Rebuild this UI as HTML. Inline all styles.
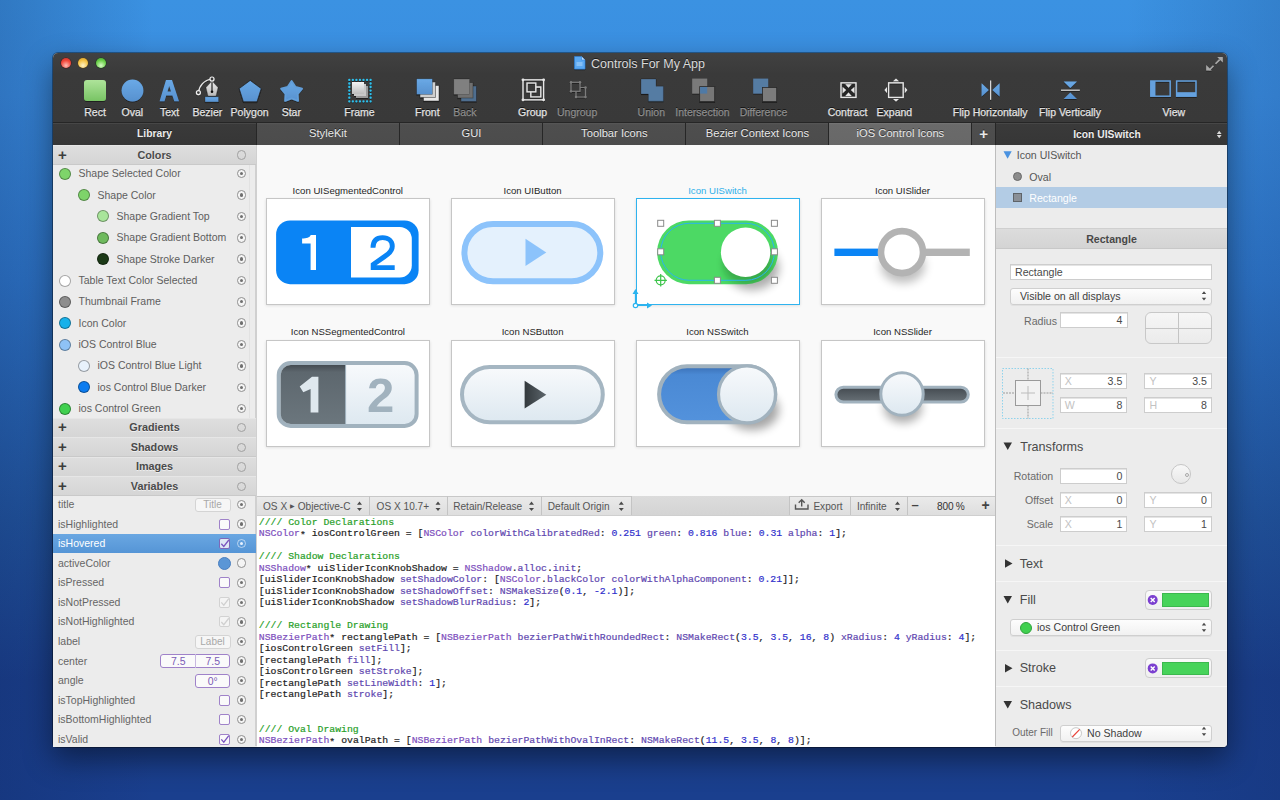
<!DOCTYPE html>
<html><head><meta charset="utf-8">
<style>
*{margin:0;padding:0;box-sizing:border-box}
html,body{width:1280px;height:800px;overflow:hidden}
body{position:relative;font-family:"Liberation Sans",sans-serif;
background:linear-gradient(180deg,#3b92e2 0%,#3a8de0 12%,#2f78cc 35%,#22559f 65%,#1b3f8c 85%,#1a3f8e 100%);}
.bgl{position:absolute;left:0;top:0;width:1280px;height:800px;
background:linear-gradient(90deg,rgba(10,30,80,.22) 0%,rgba(10,30,80,0) 12%,rgba(10,30,80,0) 88%,rgba(10,30,80,.15) 100%)}
.a{position:absolute;white-space:nowrap}
#win{position:absolute;left:53px;top:53px;width:1174px;height:694px;border-radius:5px 5px 4px 4px;
box-shadow:0 0 0 1px rgba(0,0,0,.35),0 12px 30px rgba(0,0,0,.45);background:#ececec}
#tb{position:absolute;left:53px;top:53px;width:1174px;height:70px;border-radius:5px 5px 0 0;background:linear-gradient(180deg,#414141,#3a3a3a 30%,#393939)}
.tl{position:absolute;top:57.8px;width:10px;height:10px;border-radius:50%}
.ti{position:absolute;top:105.5px;font-size:10.5px;line-height:13px;color:#e4e4e4;-webkit-text-stroke:.25px #e4e4e4;white-space:nowrap;text-shadow:0 -1px 0 rgba(0,0,0,.7);transform:translateX(-50%)}
.ti.dis{color:#8d8d8d;-webkit-text-stroke:.25px #8d8d8d}
svg{position:absolute;left:0;top:0;overflow:visible}

.tabbar{position:absolute;left:53px;top:122px;width:1174px;height:23px;background:#262626}
.tab{position:absolute;top:123px;height:22px;background:linear-gradient(#585858,#4e4e4e 8%,#4c4c4c);color:#e8e8e8;font-size:11.2px;line-height:21px;text-align:center;white-space:nowrap;text-shadow:0 -1px 0 rgba(0,0,0,.55)}
.tab.act{background:linear-gradient(#767676,#6a6a6a 8%,#686868)}
.hdr{position:absolute;top:123px;height:22px;background:linear-gradient(#3a3a3a,#363636);box-shadow:inset 0 1px 0 #474747;color:#ececec;font-size:10.3px;font-weight:bold;line-height:22px;text-align:center;text-shadow:0 -1px 0 rgba(0,0,0,.6)}

.lp{position:absolute;left:53px;top:145px;width:203px;height:602px;background:#ececec}
.sh{position:absolute;left:53px;width:202.5px;height:20px;background:linear-gradient(#dedede,#d5d5d5);border-bottom:1px solid #c9c9c9;border-top:1px solid #e6e6e6}
.sht{position:absolute;left:54px;width:201px;text-align:center;font-size:10.8px;font-weight:bold;color:#4a4a4a;line-height:14px;text-shadow:0 1px 0 rgba(255,255,255,.6)}
.row{position:absolute;font-size:10.5px;color:#5e5e5e;line-height:14px;white-space:nowrap}
.sw{position:absolute;width:12px;height:12px;border-radius:50%;border:1px solid rgba(0,0,0,.35)}
.rad{position:absolute;width:9.5px;height:9.5px;border-radius:50%;border:1.2px solid #8f8f8f;background:#f4f4f4;margin-left:.2px;margin-top:.2px}
.rad.on::after{content:"";position:absolute;left:2px;top:2px;width:3.4px;height:3.4px;border-radius:50%;background:#6f6f6f}
.cb{position:absolute;width:11px;height:11px;border-radius:2px;border:1px solid #9f82c9;background:#fafafa}
.tf{position:absolute;height:14px;border:1px solid #d4d4d4;border-radius:3px;background:#f6f6f6;font-size:10px;color:#a8a8a8;line-height:12px;text-align:center}
.pf{position:absolute;height:14px;border:1.2px solid #9f82c9;border-radius:3px;background:#fafafa;font-size:10.5px;color:#7b5cb6;line-height:12px;text-align:center}

.cv{position:absolute;left:257px;top:145px;width:738px;height:351px;background:#f9f9f9}
.fr{position:absolute;width:164px;height:107px;background:#fff;border:1px solid #c6c6c6;box-shadow:0 .5px 3px rgba(0,0,0,.13)}
.fl{position:absolute;font-size:9.6px;color:#262626;line-height:12px;text-align:center;white-space:nowrap;width:164px}

.ctb{position:absolute;left:257px;top:495.5px;width:738px;height:20px;background:linear-gradient(#eaeaea,#dedede);border-top:1px solid #c8c8c8;border-bottom:1px solid #cfcfcf}
.ctt{position:absolute;top:499.9px;font-size:10.1px;line-height:14px;color:#555;white-space:nowrap}
.csep{position:absolute;top:496px;width:1px;height:19px;background:#c4c4c4}
.code{position:absolute;left:257px;top:515.5px;width:738px;height:231px;background:#fff}
.cl{position:absolute;left:258.8px;font-family:"Liberation Mono",monospace;font-size:9.8px;line-height:11.5px;color:#1e1e1e;white-space:pre;-webkit-text-stroke:.2px currentColor}
.cm{color:#28a028}.ty{color:#7d4fbd}.me{color:#5f48b0}.nu{color:#3030cc}

.rp{position:absolute;left:996px;top:145px;width:231px;height:602px;background:#ececec;border-radius:0 0 4px 0}
.rt{position:absolute;font-size:10.6px;line-height:14px;color:#5a5a5a;white-space:nowrap}
.rh{position:absolute;font-size:12.6px;line-height:16px;color:#4a4a4a;white-space:nowrap}
.div{position:absolute;left:996px;width:231px;height:1px;background:#d2d2d2;border-bottom:1px solid #f6f6f6}
.nf{position:absolute;height:16px;background:#fff;border:1px solid #cdcdcd;box-shadow:inset 0 1px 0 #e4e4e4;font-size:10.6px;line-height:14px;color:#4a4a4a;white-space:nowrap}
.nf .v{position:absolute;right:4px;top:0}
.nf .p{position:absolute;left:4px;top:0;color:#c2c2c2}
.pop{position:absolute;height:17px;background:linear-gradient(#fdfdfd,#f1f1f1);border:1px solid #cfcfcf;border-radius:3px;box-shadow:0 1px 0 rgba(0,0,0,.05);font-size:10.6px;line-height:15px;color:#3e3e3e;white-space:nowrap}
.well{position:absolute;width:67px;height:20px;background:linear-gradient(#fbfbfb,#efefef);border:1px solid #cdcdcd;border-radius:4px}
</style></head>
<body>
<div class="bgl"></div>
<div id="win"></div>
<div id="tb"></div>
<div class="tl" style="left:60.8px;background:radial-gradient(circle at 50% 75%,#ffc0b8,#f4493c 55%,#c42a20);box-shadow:0 0 0 .6px rgba(80,0,0,.6)"></div>
<div class="tl" style="left:78.4px;background:radial-gradient(circle at 50% 75%,#fff2c8,#f6c448 55%,#d09520);box-shadow:0 0 0 .6px rgba(90,60,0,.6)"></div>
<div class="tl" style="left:96.2px;background:radial-gradient(circle at 50% 75%,#d8fbc8,#6ed24c 55%,#3c9a26);box-shadow:0 0 0 .6px rgba(0,60,0,.6)"></div>
<div class="a" style="left:591px;top:56.5px;font-size:12.5px;line-height:15px;color:#dadada;text-shadow:0 -1px 0 rgba(0,0,0,.6)">Controls For My App</div>
<svg width="1280" height="130" viewBox="0 0 1280 130">
 <defs>
  <linearGradient id="gRect" x1="0" y1="0" x2="0" y2="1"><stop offset="0" stop-color="#aee39a"/><stop offset="1" stop-color="#78c464"/></linearGradient>
  <linearGradient id="gBlue" x1="0" y1="0" x2="0" y2="1"><stop offset="0" stop-color="#6aa9e6"/><stop offset="1" stop-color="#5791cf"/></linearGradient>
  <linearGradient id="gNib" x1="0" y1="0" x2="0" y2="1"><stop offset="0" stop-color="#f0f0f0"/><stop offset="1" stop-color="#b8b8b8"/></linearGradient>
  <linearGradient id="gW" x1="0" y1="0" x2="0" y2="1"><stop offset="0" stop-color="#f4f4f4"/><stop offset="1" stop-color="#bdbdbd"/></linearGradient>
  <linearGradient id="gG" x1="0" y1="0" x2="0" y2="1"><stop offset="0" stop-color="#8a8a8a"/><stop offset="1" stop-color="#6a6a6a"/></linearGradient>
 <filter id="ds" x="-20%" y="-20%" width="140%" height="140%"><feDropShadow dx="0" dy=".6" stdDeviation=".7" flood-color="#000" flood-opacity=".75"/></filter>
 </defs>
<g filter="url(#ds)">
 <!-- doc icon -->
 <path d="M574.5 56.5h7l3.5 3.5v9h-10.5z" fill="#5aa8f2" stroke="#2f7fd6" stroke-width=".6"/>
 <path d="M581.5 56.5v3.5h3.5" fill="#bfe0ff" stroke="#2f7fd6" stroke-width=".6"/>
 <path d="M576.5 63h6M576.5 65h6" stroke="#d8ecff" stroke-width=".7"/>
 <!-- resize -->
 <path d="M1215.5 63.8l4.2-4.2M1213.5 65.8l-4.2 4.2" stroke="#a8a8a8" stroke-width="1.6" fill="none"/>
 <path d="M1217.2 57h5.6v5.6zM1211.8 70.6h-5.6v-5.6z" fill="#a8a8a8"/>
 <!-- Rect -->
 <rect x="84" y="80" width="22" height="21" rx="3" fill="url(#gRect)"/>
 <!-- Oval -->
 <circle cx="132.5" cy="90.5" r="10.9" fill="url(#gBlue)"/>
 <!-- Text A -->
 <path d="M166 80H172L179 101.2H174.3L172.4 95.6H166.2L164.5 101.2H159.6ZM169.2 86L171 91.4H167.5Z" fill="url(#gBlue)" fill-rule="evenodd"/>
 <!-- Bezier -->
 <path d="M198.5 92.5C199 86 204 80 212 79" stroke="#e8e8e8" stroke-width="1.2" fill="none"/>
 <circle cx="198.4" cy="92.6" r="2" fill="#3a3a3a" stroke="#eee" stroke-width="1.2"/>
 <path d="M212 81l6 6.5-2 8.5h-8l-2-8.5z" fill="url(#gNib)" stroke="#222" stroke-opacity=".5" stroke-width=".6"/>
 <path d="M212 82v9.5" stroke="#222" stroke-width="1.2"/>
 <circle cx="212" cy="91.7" r="1.3" fill="#111"/>
 <circle cx="212" cy="79" r="2" fill="#3a3a3a" stroke="#eee" stroke-width="1.2"/>
 <rect x="205" y="96.8" width="13.6" height="5.2" fill="url(#gBlue)" stroke="#222" stroke-opacity=".5" stroke-width=".6"/>
 <!-- Polygon -->
 <path d="M250.2 80.4l11 8.2-4.2 13.2h-13.6l-4.2-13.2z" fill="url(#gBlue)" stroke="#1f1f1f" stroke-opacity=".7" stroke-width="1"/>
 <!-- Star -->
 <path d="M291.6 81.0 L295.4 86.8 L302.1 88.6 L297.7 94.0 L298.1 100.9 L291.6 98.4 L285.1 100.9 L285.5 94.0 L281.1 88.6 L287.8 86.8Z" fill="url(#gBlue)" stroke="#629ed9" stroke-width="1.8" stroke-linejoin="round"/>
 <!-- Frame -->
 <g fill="#2ec1ee"><circle cx="349.30" cy="79.9" r="1.15"/><circle cx="349.30" cy="101.3" r="1.15"/><circle cx="352.85" cy="79.9" r="1.15"/><circle cx="352.85" cy="101.3" r="1.15"/><circle cx="356.40" cy="79.9" r="1.15"/><circle cx="356.40" cy="101.3" r="1.15"/><circle cx="359.95" cy="79.9" r="1.15"/><circle cx="359.95" cy="101.3" r="1.15"/><circle cx="363.50" cy="79.9" r="1.15"/><circle cx="363.50" cy="101.3" r="1.15"/><circle cx="367.05" cy="79.9" r="1.15"/><circle cx="367.05" cy="101.3" r="1.15"/><circle cx="370.60" cy="79.9" r="1.15"/><circle cx="370.60" cy="101.3" r="1.15"/><circle cx="349.3" cy="83.5" r="1.15"/><circle cx="370.6" cy="83.5" r="1.15"/><circle cx="349.3" cy="87" r="1.15"/><circle cx="370.6" cy="87" r="1.15"/><circle cx="349.3" cy="90.6" r="1.15"/><circle cx="370.6" cy="90.6" r="1.15"/><circle cx="349.3" cy="94.1" r="1.15"/><circle cx="370.6" cy="94.1" r="1.15"/><circle cx="349.3" cy="97.7" r="1.15"/><circle cx="370.6" cy="97.7" r="1.15"/></g>
 <rect x="356" y="86" width="12" height="12" fill="#9a9a9a"/>
 <rect x="354" y="84" width="12" height="12" fill="#c8c8c8"/>
 <rect x="352" y="82" width="12" height="12" fill="url(#gW)"/>
 <!-- Front -->
 <rect x="423.5" y="85.5" width="15.5" height="15.5" fill="#e8e8e8" stroke="#222" stroke-opacity=".6" stroke-width=".8"/>
 <rect x="420" y="82" width="15.5" height="15.5" fill="#cfcfcf" stroke="#222" stroke-opacity=".6" stroke-width=".8"/>
 <rect x="416.6" y="78.8" width="15.8" height="15.6" fill="url(#gBlue)" stroke="#222" stroke-opacity=".5" stroke-width=".6"/>
 <!-- Back -->
 <rect x="461" y="86" width="15.5" height="15.5" fill="#4f6e8f" stroke="#222" stroke-opacity=".5" stroke-width=".8"/>
 <rect x="457.5" y="82.5" width="15.5" height="15.5" fill="#6f6f6f" stroke="#222" stroke-opacity=".5" stroke-width=".8"/>
 <rect x="453.8" y="79" width="15.8" height="15.4" fill="#808080" stroke="#222" stroke-opacity=".4" stroke-width=".6"/>
 <!-- Group -->
 <rect x="523" y="79.8" width="20.6" height="20" fill="none" stroke="#e6e6e6" stroke-width="1.3"/>
 <g fill="#e6e6e6"><circle cx="523" cy="79.8" r="1.4"/><circle cx="543.6" cy="79.8" r="1.4"/><circle cx="523" cy="99.8" r="1.4"/><circle cx="543.6" cy="99.8" r="1.4"/></g>
 <rect x="527" y="83" width="8.8" height="8.8" fill="none" stroke="#e6e6e6" stroke-width="1.3"/>
 <path d="M535.8 87h5v9.8h-10v-5" fill="none" stroke="#e6e6e6" stroke-width="1.3"/>
 <!-- Ungroup -->
 <g stroke="#7c7c7c" stroke-width="1.2" fill="none"><rect x="571" y="82.3" width="9" height="9"/><path d="M580 87.5h5.5v9.5h-9.5v-5.7"/></g>
 <g fill="#7c7c7c"><circle cx="571" cy="82.3" r="1.2"/><circle cx="580" cy="82.3" r="1.2"/><circle cx="571" cy="91.3" r="1.2"/><circle cx="585.5" cy="87.5" r="1.2"/><circle cx="576" cy="97" r="1.2"/><circle cx="585.5" cy="97" r="1.2"/></g>
 <!-- Union -->
 <path d="M641 79h15v7.2h7.4v15h-15v-7.2h-7.4z" fill="#557ba3" stroke="#222" stroke-opacity=".4" stroke-width=".6"/>
 <!-- Intersection -->
 <rect x="692.2" y="78.6" width="15" height="15" fill="#7a7a7a"/>
 <rect x="699.7" y="86.6" width="15" height="15" fill="#777" stroke="#2a2a2a" stroke-width=".8"/>
 <rect x="700.1" y="87" width="7.1" height="6.6" fill="#4f7aa6"/>
 <!-- Difference -->
 <rect x="753.2" y="78.6" width="15" height="15" fill="#557ba3"/>
 <rect x="762.5" y="87.5" width="14.2" height="14.1" fill="#7c7c7c" stroke="#2a2a2a" stroke-width=".8"/>
 <!-- Contract -->
 <rect x="841" y="82.8" width="15" height="14.6" fill="none" stroke="#e6e6e6" stroke-width="1.3"/>
 <path d="M843 84.5l11 11M854 84.5l-11 11" stroke="#262626" stroke-width="1.8"/>
 <path d="M845.4 84.3h6.2l-3.1 3.5zM845.4 96h6.2l-3.1-3.5zM842.6 87v6.2l3.5-3.1zM854.4 87v6.2l-3.5-3.1z" fill="#e6e6e6"/>
 <!-- Expand -->
 <rect x="888.6" y="82.8" width="14.6" height="14.6" fill="none" stroke="#e6e6e6" stroke-width="1.3"/>
 <path d="M893 81.2l3-2.6 3 2.6zM893 99l3 2.6 3-2.6zM887 87.1l-2.6 3 2.6 3zM904.8 87.1l2.6 3-2.6 3z" fill="#e6e6e6"/>
 <!-- Flip H -->
 <path d="M990.6 80.4v19.4" stroke="#d8d8d8" stroke-width="1.2"/>
 <path d="M981.6 83.3l7.2 6.6-7.2 6.6zM999.6 83.3l-7.2 6.6 7.2 6.6z" fill="url(#gBlue)"/>
 <!-- Flip V -->
 <path d="M1061 90.2h18.8" stroke="#d8d8d8" stroke-width="1.2"/>
 <path d="M1063.6 81.4h13.4l-6.7 6.6zM1063.6 99h13.4l-6.7-6.6z" fill="url(#gBlue)"/>
 <!-- View -->
 <rect x="1150.8" y="81" width="19.4" height="15.2" fill="none" stroke="#65a1de" stroke-width="1.4"/>
 <rect x="1150.8" y="81" width="4.6" height="15.2" fill="#65a1de"/>
 <rect x="1176.6" y="81" width="19.4" height="15.2" fill="none" stroke="#65a1de" stroke-width="1.4"/>
 <rect x="1176.6" y="92.2" width="19.4" height="4" fill="#65a1de"/>
</g>
</svg>
<div class="ti" style="left:95px">Rect</div>
<div class="ti" style="left:132.3px">Oval</div>
<div class="ti" style="left:169.6px">Text</div>
<div class="ti" style="left:207.4px">Bezier</div>
<div class="ti" style="left:249.6px">Polygon</div>
<div class="ti" style="left:291.3px">Star</div>
<div class="ti" style="left:359.4px">Frame</div>
<div class="ti" style="left:427.3px">Front</div>
<div class="ti dis" style="left:464.9px">Back</div>
<div class="ti" style="left:532.6px">Group</div>
<div class="ti dis" style="left:577.1px">Ungroup</div>
<div class="ti dis" style="left:651.3px">Union</div>
<div class="ti dis" style="left:702.5px">Intersection</div>
<div class="ti dis" style="left:763.5px">Difference</div>
<div class="ti" style="left:847.5px">Contract</div>
<div class="ti" style="left:894.4px">Expand</div>
<div class="ti" style="left:990.2px">Flip Horizontally</div>
<div class="ti" style="left:1070px">Flip Vertically</div>
<div class="ti" style="left:1173.8px">View</div>

<div class="tabbar"></div><div class="hdr" style="left:53px;width:203px">Library</div><div class="tab" style="left:257px;width:142px">StyleKit</div><div class="tab" style="left:400.4px;width:142px">GUI</div><div class="tab" style="left:543.4px;width:142px">Toolbar Icons</div><div class="tab" style="left:686.4px;width:142px">Bezier Context Icons</div><div class="tab act" style="left:829.4px;width:142px">iOS Control Icons</div><div class="tab" style="left:972.3px;width:22.7px;font-size:15px;font-weight:bold">+</div><div class="hdr" style="left:996px;width:231px;padding-right:9px;line-height:23.5px">Icon UISwitch</div><svg width="1280" height="800"><path d="M1216.8 133.9l2.4-3.2 2.4 3.2zM1216.8 135l2.4 3.2 2.4-3.2z" fill="#d8d8d8"/></svg><div class="lp"></div><div class="a" style="left:255px;top:145px;width:1.5px;height:601px;background:#d0d0d0"></div><div class="a" style="left:249px;top:145px;width:1px;height:351px;background:#e2e2e2"></div><div class="sh" style="top:145px"></div><div class="a" style="left:58px;top:147.5px;font-size:15px;font-weight:bold;color:#3d3d3d;line-height:14px">+</div><div class="sht" style="top:147.6px">Colors</div><div class="rad" style="left:236.5px;top:150.3px;background:transparent;border-color:#a0a0a0"></div><div class="sw" style="left:59px;top:167.75px;background:#7ed46a"></div><div class="row" style="left:78.5px;top:166.25px">Shape Selected Color</div><div class="rad on" style="left:236.5px;top:168.75px"></div><div class="sw" style="left:78px;top:189.11px;background:#7ed46a"></div><div class="row" style="left:97.5px;top:187.61px">Shape Color</div><div class="rad on" style="left:236.5px;top:190.11px"></div><div class="sw" style="left:97px;top:210.47px;background:#a9e59b"></div><div class="row" style="left:116.5px;top:208.97px">Shape Gradient Top</div><div class="rad on" style="left:236.5px;top:211.47px"></div><div class="sw" style="left:97px;top:231.82999999999998px;background:#6fba5e"></div><div class="row" style="left:116.5px;top:230.32999999999998px">Shape Gradient Bottom</div><div class="rad on" style="left:236.5px;top:232.82999999999998px"></div><div class="sw" style="left:97px;top:253.19px;background:#1c3a18"></div><div class="row" style="left:116.5px;top:251.69px">Shape Stroke Darker</div><div class="rad on" style="left:236.5px;top:254.19px"></div><div class="sw" style="left:59px;top:274.55px;background:#ffffff"></div><div class="row" style="left:78.5px;top:273.05px">Table Text Color Selected</div><div class="rad on" style="left:236.5px;top:275.55px"></div><div class="sw" style="left:59px;top:295.90999999999997px;background:#8d8d8d"></div><div class="row" style="left:78.5px;top:294.40999999999997px">Thumbnail Frame</div><div class="rad on" style="left:236.5px;top:296.90999999999997px"></div><div class="sw" style="left:59px;top:317.27px;background:#17b1ea"></div><div class="row" style="left:78.5px;top:315.77px">Icon Color</div><div class="rad on" style="left:236.5px;top:318.27px"></div><div class="sw" style="left:59px;top:338.63px;background:#8ec2f6"></div><div class="row" style="left:78.5px;top:337.13px">iOS Control Blue</div><div class="rad on" style="left:236.5px;top:339.63px"></div><div class="sw" style="left:78px;top:359.99px;background:#e8f2fc"></div><div class="row" style="left:97.5px;top:358.49px">iOS Control Blue Light</div><div class="rad on" style="left:236.5px;top:360.99px"></div><div class="sw" style="left:78px;top:381.35px;background:#0b7cf0"></div><div class="row" style="left:97.5px;top:379.85px">ios Control Blue Darker</div><div class="rad on" style="left:236.5px;top:382.35px"></div><div class="sw" style="left:59px;top:402.71px;background:#40d04f"></div><div class="row" style="left:78.5px;top:401.21px">ios Control Green</div><div class="rad on" style="left:236.5px;top:403.71px"></div><div class="sh" style="top:417.5px"></div><div class="a" style="left:58px;top:420.0px;font-size:15px;font-weight:bold;color:#3d3d3d;line-height:14px">+</div><div class="sht" style="top:420.1px">Gradients</div><div class="rad" style="left:236.5px;top:422.8px;background:transparent;border-color:#a0a0a0"></div><div class="sh" style="top:437.05px"></div><div class="a" style="left:58px;top:439.55px;font-size:15px;font-weight:bold;color:#3d3d3d;line-height:14px">+</div><div class="sht" style="top:439.65000000000003px">Shadows</div><div class="rad" style="left:236.5px;top:442.35px;background:transparent;border-color:#a0a0a0"></div><div class="sh" style="top:456.6px"></div><div class="a" style="left:58px;top:459.1px;font-size:15px;font-weight:bold;color:#3d3d3d;line-height:14px">+</div><div class="sht" style="top:459.20000000000005px">Images</div><div class="rad" style="left:236.5px;top:461.90000000000003px;background:transparent;border-color:#a0a0a0"></div><div class="sh" style="top:476.15px"></div><div class="a" style="left:58px;top:478.65px;font-size:15px;font-weight:bold;color:#3d3d3d;line-height:14px">+</div><div class="sht" style="top:478.75px">Variables</div><div class="rad" style="left:236.5px;top:481.45px;background:transparent;border-color:#a0a0a0"></div><div class="row" style="left:58px;top:497.1px;color:#666">title</div><div class="rad on" style="left:236.5px;top:499.6px"></div><div class="tf" style="left:194.5px;top:497.6px;width:36px">Title</div><div class="row" style="left:58px;top:516.66px;color:#666">isHighlighted</div><div class="rad on" style="left:236.5px;top:519.16px"></div><div class="cb" style="left:219.3px;top:518.66px;border-color:#9f82c9;background:#fafafa"></div><div class="a" style="left:53px;top:533.9200000000001px;width:202.5px;height:19.5px;background:linear-gradient(#6aa7e2,#5595d6)"></div><div class="row" style="left:58px;top:536.22px;color:#ffffff">isHovered</div><div class="rad" style="left:236.5px;top:538.72px;border-color:rgba(255,255,255,.55);background:transparent"></div><div class="a" style="left:239.6px;top:541.82px;width:3.6px;height:3.6px;border-radius:50%;background:#e8f2ff"></div><div class="cb" style="left:219.3px;top:538.22px;border-color:#7d68b8;background:#dfe8f4"></div><svg width="1280" height="800"><path d="M221.3 543.72l2.5 2.8 5-6.5" stroke="#7b55c0" stroke-width="1.3" fill="none"/></svg><div class="row" style="left:58px;top:555.78px;color:#666">activeColor</div><div class="rad" style="left:236.5px;top:558.28px"></div><div class="sw" style="left:218px;top:556.78px;width:13px;height:13px;background:#5b96d6;border-color:#4a7fc0"></div><div class="row" style="left:58px;top:575.34px;color:#666">isPressed</div><div class="rad on" style="left:236.5px;top:577.84px"></div><div class="cb" style="left:219.3px;top:577.34px;border-color:#9f82c9;background:#fafafa"></div><div class="row" style="left:58px;top:594.9px;color:#666">isNotPressed</div><div class="rad on" style="left:236.5px;top:597.4px"></div><div class="cb" style="left:219.3px;top:596.9px;border-color:#d2d2d2;background:#f4f4f4"></div><svg width="1280" height="800"><path d="M221.3 602.4l2.5 2.8 5-6.5" stroke="#d0d0d0" stroke-width="1.3" fill="none"/></svg><div class="row" style="left:58px;top:614.46px;color:#666">isNotHighlighted</div><div class="rad on" style="left:236.5px;top:616.96px"></div><div class="cb" style="left:219.3px;top:616.46px;border-color:#d2d2d2;background:#f4f4f4"></div><svg width="1280" height="800"><path d="M221.3 621.96l2.5 2.8 5-6.5" stroke="#d0d0d0" stroke-width="1.3" fill="none"/></svg><div class="row" style="left:58px;top:634.02px;color:#666">label</div><div class="rad on" style="left:236.5px;top:636.52px"></div><div class="tf" style="left:194.5px;top:634.52px;width:36px">Label</div><div class="row" style="left:58px;top:653.58px;color:#666">center</div><div class="rad on" style="left:236.5px;top:656.08px"></div><div class="pf" style="left:159.8px;top:654.08px;width:70.6px"><span style="position:absolute;left:0;width:35px">7.5</span><span style="position:absolute;left:34px;top:-1px;width:1px;height:14px;background:#c8b8e0"></span><span style="position:absolute;left:35px;width:34px">7.5</span></div><div class="row" style="left:58px;top:673.14px;color:#666">angle</div><div class="rad on" style="left:236.5px;top:675.64px"></div><div class="pf" style="left:195.3px;top:673.64px;width:35px">0°</div><div class="row" style="left:58px;top:692.7px;color:#666">isTopHighlighted</div><div class="rad on" style="left:236.5px;top:695.2px"></div><div class="cb" style="left:219.3px;top:694.7px;border-color:#9f82c9;background:#fafafa"></div><div class="row" style="left:58px;top:712.26px;color:#666">isBottomHighlighted</div><div class="rad on" style="left:236.5px;top:714.76px"></div><div class="cb" style="left:219.3px;top:714.26px;border-color:#9f82c9;background:#fafafa"></div><div class="row" style="left:58px;top:731.8199999999999px;color:#666">isValid</div><div class="rad on" style="left:236.5px;top:734.3199999999999px"></div><div class="cb" style="left:219.3px;top:733.8199999999999px;border-color:#9f82c9;background:#fafafa"></div><svg width="1280" height="800"><path d="M221.3 739.3199999999999l2.5 2.8 5-6.5" stroke="#7b55c0" stroke-width="1.3" fill="none"/></svg><div class="cv"></div><div class="fr" style="left:265.8px;top:198.3px;"></div><div class="fl" style="left:265.8px;top:184.8px;color:#262626">Icon UISegmentedControl</div><div class="fr" style="left:450.6px;top:198.3px;"></div><div class="fl" style="left:450.6px;top:184.8px;color:#262626">Icon UIButton</div><div class="fr" style="left:635.5px;top:198.3px;border-color:#2fb3ef"></div><div class="fl" style="left:635.5px;top:184.8px;color:#2fb0ea">Icon UISwitch</div><div class="fr" style="left:820.5px;top:198.3px;"></div><div class="fl" style="left:820.5px;top:184.8px;color:#262626">Icon UISlider</div><div class="fr" style="left:265.8px;top:339.9px;"></div><div class="fl" style="left:265.8px;top:326.4px;color:#262626">Icon NSSegmentedControl</div><div class="fr" style="left:450.6px;top:339.9px;"></div><div class="fl" style="left:450.6px;top:326.4px;color:#262626">Icon NSButton</div><div class="fr" style="left:635.5px;top:339.9px;"></div><div class="fl" style="left:635.5px;top:326.4px;color:#262626">Icon NSSwitch</div><div class="fr" style="left:820.5px;top:339.9px;"></div><div class="fl" style="left:820.5px;top:326.4px;color:#262626">Icon NSSlider</div><svg width="1280" height="800" viewBox="0 0 1280 800">
<defs>
 <linearGradient id="nsL" x1="0" y1="0" x2="0" y2="1"><stop offset="0" stop-color="#f8fafc"/><stop offset="1" stop-color="#dde8f0"/></linearGradient>
 <linearGradient id="nsTr" x1="0" y1="0" x2="0" y2="1"><stop offset="0" stop-color="#434a50"/><stop offset="1" stop-color="#687177"/></linearGradient>
 <linearGradient id="nsD" x1="0" y1="0" x2="0" y2="1"><stop offset="0" stop-color="#454c52"/><stop offset=".12" stop-color="#5d676e"/><stop offset="1" stop-color="#6b767d"/></linearGradient>
 <linearGradient id="nsB" x1="0" y1="0" x2="0" y2="1"><stop offset="0" stop-color="#3a6fb5"/><stop offset=".15" stop-color="#4a89d4"/><stop offset="1" stop-color="#5392dc"/></linearGradient>
 <linearGradient id="nsT" x1="0" y1="0" x2="1" y2="0"><stop offset="0" stop-color="#33393d"/><stop offset="1" stop-color="#5c656b"/></linearGradient>
 <filter id="shd" x="-50%" y="-50%" width="200%" height="200%"><feGaussianBlur stdDeviation="3.5"/></filter>
 <filter id="shd2" x="-50%" y="-50%" width="200%" height="200%"><feGaussianBlur stdDeviation="5"/></filter>
 <clipPath id="swclip"><rect x="657.1" y="220.4" width="120.9" height="63.8" rx="31.9"/></clipPath>
 <clipPath id="segclip"><rect x="276.1" y="220.4" width="142.5" height="63.8" rx="14"/></clipPath>
</defs>
<!-- UISegmented -->
<rect x="276.1" y="220.4" width="142.5" height="63.8" rx="14" fill="#0a84f5"/>
<path d="M351 226.9h48.8a12 12 0 0 1 12 12v26.5a12 12 0 0 1-12 12h-48.8z" fill="#fff"/>
<path d="M316 235V270.1h-5.4V243.4h-8.5v-4.9c4.3 0 7.6-.9 8.6-3.5z" fill="#fff"/>
<path d="M373 247.8c0-7.3 4-10.2 9.6-10.2 6 0 9.7 3.6 9.7 8.6 0 4.6-2.8 7.2-7.5 10.2L373.2 264.5v3.1h21.5" stroke="#0a84f5" stroke-width="4.9" fill="none"/>
<!-- UIButton -->
<rect x="464.4" y="224" width="135.9" height="57.2" rx="28.6" fill="#e4f1fd" stroke="#8cc3fb" stroke-width="6"/>
<path d="M525.5 238.8l20.8 13.6-20.8 13.7z" fill="#8cc3fb"/>
<!-- UISwitch -->
<ellipse cx="752" cy="268" rx="27" ry="22" fill="#000" opacity=".32" filter="url(#shd2)"/>
<rect x="657.1" y="220.4" width="120.9" height="63.8" rx="31.9" fill="#4cd964"/>
<ellipse cx="748" cy="264" rx="25" ry="22" fill="#0a3a10" opacity=".28" filter="url(#shd)" clip-path="url(#swclip)"/>
<circle cx="745.6" cy="252.3" r="24.7" fill="#fff"/>
<rect x="660.7" y="223.3" width="113.7" height="57" rx="28.5" fill="none" stroke="#2ab4ef" stroke-width="1"/>
<g fill="#fff" stroke="#8a8a8a" stroke-width="1">
<rect x="657.7" y="220.3" width="6" height="6"/><rect x="714.4" y="220.3" width="6" height="6"/><rect x="771.4" y="220.3" width="6" height="6"/>
<rect x="657.7" y="248.8" width="6" height="6"/><rect x="771.4" y="248.8" width="6" height="6"/>
<rect x="714.4" y="277.3" width="6" height="6"/><rect x="771.4" y="277.3" width="6" height="6"/>
</g>
<circle cx="660.7" cy="280.3" r="4.5" fill="none" stroke="#3cc44a" stroke-width="1.2"/>
<path d="M654.5 280.3h12.4M660.7 274.1v12.4" stroke="#3cc44a" stroke-width="1.2"/>
<path d="M635.5 305.5v-12M635.5 305.5h12" stroke="#2ab4ef" stroke-width="1.2"/>
<path d="M632.5 294l3-5 3 5zM647 302.5l5 3-5 3z" fill="#2ab4ef"/>
<circle cx="635.5" cy="305.5" r="2.2" fill="#fff" stroke="#2ab4ef" stroke-width="1.2"/>
<!-- UISlider -->
<ellipse cx="903" cy="266" rx="22" ry="17" fill="#000" opacity=".25" filter="url(#shd2)"/>
<rect x="834.4" y="248.6" width="44" height="7.4" fill="#0a84f5"/>
<rect x="925" y="248.6" width="44.8" height="7.4" fill="#b3b3b3"/>
<circle cx="902" cy="252.1" r="21" fill="#fff" stroke="#b3b3b3" stroke-width="6.6"/>
<!-- NSSegmented -->
<rect x="278.7" y="363.1" width="137.9" height="62.8" rx="12" fill="url(#nsL)" stroke="#a1b2be" stroke-width="4"/>
<path d="M345.6 365.1h-54.9a10 10 0 0 0-10 10v38.8a10 10 0 0 0 10 10h54.9z" fill="url(#nsD)"/>
<path d="M345.6 365.1v58.8" stroke="#a1b2be" stroke-width="1"/>
<path d="M318.4 376.8V412.5h-7.8V389l-7.3 3.2-3.6-5.8 12.3-9.6z" fill="#dfe8ee"/>
<text x="380.6" y="412.4" font-family="Liberation Sans" font-weight="bold" font-size="49" fill="#a1b2be" text-anchor="middle">2</text>
<!-- NSButton -->
<rect x="462" y="366.9" width="140.8" height="55.4" rx="27.7" fill="url(#nsL)" stroke="#a5b6c2" stroke-width="4"/>
<path d="M524.6 380.7l21.7 14-21.7 13.9z" fill="url(#nsT)"/>
<!-- NSSwitch -->
<ellipse cx="752" cy="410" rx="27" ry="20" fill="#000" opacity=".35" filter="url(#shd2)"/>
<rect x="659.1" y="366.3" width="116.3" height="56" rx="28" fill="url(#nsB)" stroke="#a1b2be" stroke-width="4"/>
<circle cx="747" cy="394.3" r="28.5" fill="url(#nsL)" stroke="#a1b2be" stroke-width="3.2"/>
<!-- NSSlider -->
<ellipse cx="903" cy="408" rx="19" ry="15" fill="#000" opacity=".32" filter="url(#shd2)"/>
<rect x="835.9" y="387.2" width="132.4" height="14.8" rx="7.4" fill="url(#nsTr)" stroke="#a1b2be" stroke-width="3"/>
<circle cx="902" cy="394" r="21.2" fill="url(#nsL)" stroke="#a1b2be" stroke-width="3"/>
</svg><div class="ctb"></div><div class="a" style="left:632px;top:496px;width:157px;height:19px;background:linear-gradient(#dcdcdc,#d4d4d4)"></div><div class="csep" style="left:369.4px"></div><div class="csep" style="left:446.6px"></div><div class="csep" style="left:540.5px"></div><div class="csep" style="left:631.3px"></div><div class="csep" style="left:789px"></div><div class="csep" style="left:850px"></div><div class="csep" style="left:907.2px"></div><div class="ctt" style="left:263px">OS X <span style="font-size:6px;position:relative;top:-1.5px">&#9654;</span> Objective-C</div><svg width="1280" height="800"><path d="M357.0 504.8l2.5-3.2 2.5 3.2zM357.0 507.9l2.5 3.2 2.5-3.2z" fill="#4a4a4a"/></svg><div class="ctt" style="left:376.6px">OS X 10.7+</div><svg width="1280" height="800"><path d="M435.5 504.8l2.5-3.2 2.5 3.2zM435.5 507.9l2.5 3.2 2.5-3.2z" fill="#4a4a4a"/></svg><div class="ctt" style="left:453.2px">Retain/Release</div><svg width="1280" height="800"><path d="M529.0 504.8l2.5-3.2 2.5 3.2zM529.0 507.9l2.5 3.2 2.5-3.2z" fill="#4a4a4a"/></svg><div class="ctt" style="left:547.8px">Default Origin</div><svg width="1280" height="800"><path d="M618.8 504.8l2.5-3.2 2.5 3.2zM618.8 507.9l2.5 3.2 2.5-3.2z" fill="#4a4a4a"/></svg><svg width="1280" height="800"><path d="M795.5 504.5v4.5h12.5v-4.5" stroke="#555" stroke-width="1.4" fill="none"/><path d="M801.7 506.5v-6.5M798.7 502.8l3-3 3 3" stroke="#555" stroke-width="1.4" fill="none"/></svg><div class="ctt" style="left:813.4px">Export</div><div class="ctt" style="left:856.9px">Infinite</div><svg width="1280" height="800"><path d="M895.0 504.8l2.5-3.2 2.5 3.2zM895.0 507.9l2.5 3.2 2.5-3.2z" fill="#4a4a4a"/></svg><div class="ctt" style="left:911.5px;font-size:13px;top:497.5px;font-weight:bold;color:#444">&#8211;</div><div class="ctt" style="left:936.9px;color:#333">800&#8201;%</div><div class="ctt" style="left:981.5px;font-size:14px;top:497.8px;font-weight:bold;color:#444">+</div><div class="code"></div><div class="cl" style="top:516.5px"><span class="cm">//// Color Declarations</span></div><div class="cl" style="top:528.0px"><span class="ty">NSColor</span><span style="position:relative;top:1.8px">*</span> iosControlGreen = [<span class="ty">NSColor</span> <span class="me">colorWithCalibratedRed</span>: <span class="nu">0.251</span> <span class="me">green</span>: <span class="nu">0.816</span> <span class="me">blue</span>: <span class="nu">0.31</span> <span class="me">alpha</span>: <span class="nu">1</span>];</div><div class="cl" style="top:551.0px"><span class="cm">//// Shadow Declarations</span></div><div class="cl" style="top:562.5px"><span class="ty">NSShadow</span><span style="position:relative;top:1.8px">*</span> uiSliderIconKnobShadow = <span class="ty">NSShadow</span>.<span class="me">alloc</span>.<span class="me">init</span>;</div><div class="cl" style="top:574.0px">[uiSliderIconKnobShadow <span class="me">setShadowColor</span>: [<span class="ty">NSColor</span>.<span class="me">blackColor</span> <span class="me">colorWithAlphaComponent</span>: <span class="nu">0.21</span>]];</div><div class="cl" style="top:585.5px">[uiSliderIconKnobShadow <span class="me">setShadowOffset</span>: <span class="me">NSMakeSize</span>(<span class="nu">0.1</span>, <span class="nu">-2.1</span>)];</div><div class="cl" style="top:597.0px">[uiSliderIconKnobShadow <span class="me">setShadowBlurRadius</span>: <span class="nu">2</span>];</div><div class="cl" style="top:620.0px"><span class="cm">//// Rectangle Drawing</span></div><div class="cl" style="top:631.5px"><span class="ty">NSBezierPath</span><span style="position:relative;top:1.8px">*</span> rectanglePath = [<span class="ty">NSBezierPath</span> <span class="me">bezierPathWithRoundedRect</span>: <span class="me">NSMakeRect</span>(<span class="nu">3.5</span>, <span class="nu">3.5</span>, <span class="nu">16</span>, <span class="nu">8</span>) <span class="me">xRadius</span>: <span class="nu">4</span> <span class="me">yRadius</span>: <span class="nu">4</span>];</div><div class="cl" style="top:643.0px">[iosControlGreen <span class="me">setFill</span>];</div><div class="cl" style="top:654.5px">[rectanglePath <span class="me">fill</span>];</div><div class="cl" style="top:666.0px">[iosControlGreen <span class="me">setStroke</span>];</div><div class="cl" style="top:677.5px">[rectanglePath <span class="me">setLineWidth</span>: <span class="nu">1</span>];</div><div class="cl" style="top:689.0px">[rectanglePath <span class="me">stroke</span>];</div><div class="cl" style="top:723.5px"><span class="cm">//// Oval Drawing</span></div><div class="cl" style="top:735.0px"><span class="ty">NSBezierPath</span><span style="position:relative;top:1.8px">*</span> ovalPath = [<span class="ty">NSBezierPath</span> <span class="me">bezierPathWithOvalInRect</span>: <span class="me">NSMakeRect</span>(<span class="nu">11.5</span>, <span class="nu">3.5</span>, <span class="nu">8</span>, <span class="nu">8</span>)];</div><div class="a" style="left:995px;top:145px;width:1px;height:601px;background:#bdbdbd"></div><div class="rp"></div><svg width="1280" height="800"><path d="M1003.5 151.3h8.2l-4.1 7.4z" fill="#4a92e0"/></svg><div class="rt" style="left:1016.7px;top:148px;color:#555">Icon UISwitch</div><div class="a" style="left:1013.2px;top:171.5px;width:9px;height:9px;border-radius:50%;background:#8c8c8c;border:1px solid #6a6a6a"></div><div class="rt" style="left:1029.3px;top:169.5px;color:#555">Oval</div><div class="a" style="left:996px;top:186.5px;width:231px;height:21px;background:#b3cce5"></div><div class="a" style="left:1013.2px;top:192.5px;width:9px;height:9px;background:#8a8f96;border:1px solid #5e6368"></div><div class="rt" style="left:1029.3px;top:190.5px;color:#fff">Rectangle</div><div class="a" style="left:996px;top:228px;width:231px;height:21px;background:linear-gradient(#dcdcdc,#d4d4d4);border-top:1px solid #cfcfcf;border-bottom:1px solid #c8c8c8"></div><div class="a" style="left:996px;top:231.5px;width:231px;text-align:center;font-size:10.6px;font-weight:bold;color:#484848;line-height:14px">Rectangle</div><div class="nf" style="left:1010px;top:263.5px;width:202px;height:16px"><span style="position:absolute;left:4px;top:0">Rectangle</span></div><div class="pop" style="left:1010px;top:287.5px;width:202px"><span style="position:absolute;left:9px;top:0">Visible on all displays</span></div><svg width="1280" height="800"><path d="M1201.8 294l2.2-2.8 2.2 2.8zM1201.8 297.8l2.2 2.8 2.2-2.8z" fill="#4a4a4a"/></svg><div class="rt" style="left:1024px;top:314px;width:29px;text-align:right;color:#6a6a6a">Radius</div><div class="nf" style="left:1060px;top:312.4px;width:67.5px"><span class="v">4</span></div><div class="a" style="left:1144.6px;top:312.3px;width:67.6px;height:31.3px;border:1px solid #c8c8c8;border-radius:6px;background:linear-gradient(#f6f6f6,#ebebeb)"></div><div class="a" style="left:1178px;top:313px;width:1px;height:30px;background:#c4c4c4"></div><div class="a" style="left:1145px;top:327.5px;width:67px;height:1px;background:#c4c4c4"></div><div class="div" style="top:357px"></div><svg width="1280" height="800">
<rect x="1002.5" y="368.5" width="50.5" height="50" fill="none" stroke="#8fd3ec" stroke-width="1" stroke-dasharray="1.5 1.5"/>
<rect x="1015.5" y="380.5" width="25" height="25" fill="#f2f2f2" stroke="#9a9a9a" stroke-width="1"/>
<path d="M1028 368.5v12M1028 405.5v13M1003 393h12.5M1040.5 393h12.5" stroke="#9a9a9a" stroke-width="1" stroke-dasharray="2 1"/>
<path d="M1028 386v14M1021 393h14" stroke="#bcbcbc" stroke-width="1"/>
</svg><div class="nf" style="left:1059.8px;top:373.2px;width:67.5px"><span class="p">X</span><span class="v">3.5</span></div><div class="nf" style="left:1144.4px;top:373.2px;width:67.5px"><span class="p">Y</span><span class="v">3.5</span></div><div class="nf" style="left:1059.8px;top:397.1px;width:67.5px"><span class="p">W</span><span class="v">8</span></div><div class="nf" style="left:1144.4px;top:397.1px;width:67.5px"><span class="p">H</span><span class="v">8</span></div><div class="div" style="top:427.5px"></div><svg width="1280" height="800"><path d="M1003.5 442.5h8.5l-4.25 7.5z" fill="#333"/></svg><div class="rh" style="left:1020.2px;top:438.5px">Transforms</div><div class="rt" style="left:1004px;top:468.5px;width:49.2px;text-align:right;color:#6a6a6a">Rotation</div><div class="nf" style="left:1059.8px;top:467.5px;width:67.5px"><span class="v">0</span></div><div class="a" style="left:1170.6px;top:464.4px;width:20px;height:20px;border-radius:50%;border:1px solid #c6c6c6;background:linear-gradient(#f8f8f8,#e8e8e8)"></div><div class="a" style="left:1185px;top:472.5px;width:4px;height:4px;border-radius:50%;border:1px solid #a8a8a8"></div><div class="rt" style="left:1004px;top:492.5px;width:49.2px;text-align:right;color:#6a6a6a">Offset</div><div class="nf" style="left:1059.8px;top:491.7px;width:67.5px"><span class="p">X</span><span class="v">0</span></div><div class="nf" style="left:1144.4px;top:491.7px;width:67.5px"><span class="p">Y</span><span class="v">0</span></div><div class="rt" style="left:1004px;top:516.5px;width:49.2px;text-align:right;color:#6a6a6a">Scale</div><div class="nf" style="left:1059.8px;top:515.5px;width:67.5px"><span class="p">X</span><span class="v">1</span></div><div class="nf" style="left:1144.4px;top:515.5px;width:67.5px"><span class="p">Y</span><span class="v">1</span></div><div class="div" style="top:545px"></div><svg width="1280" height="800"><path d="M1005 559.3v8.5l7.5-4.25z" fill="#333"/></svg><div class="rh" style="left:1019.7px;top:555.5px">Text</div><div class="div" style="top:581px"></div><svg width="1280" height="800"><path d="M1003.5 596h8.5l-4.25 7.5z" fill="#333"/></svg><div class="rh" style="left:1019.7px;top:592px">Fill</div><div class="well" style="left:1144.5px;top:590px"></div><div class="a" style="left:1161.8px;top:593.2px;width:47px;height:13.8px;background:#47d35a;border:1px solid #3cb84e"></div><svg width="1280" height="800"><circle cx="1152.7" cy="600" r="5" fill="#7b3fd0"/><path d="M1150.7 598l4 4M1154.7 598l-4 4" stroke="#fff" stroke-width="1.4"/></svg><div class="pop" style="left:1010px;top:619.3px;width:202px;height:16.5px"><span style="position:absolute;left:26px;top:0">ios Control Green</span></div><div class="a" style="left:1019.7px;top:621.5px;width:12px;height:12px;border-radius:50%;background:#40d04f;border:1px solid #2fa23c"></div><svg width="1280" height="800"><path d="M1201.8 625.5l2.2-2.8 2.2 2.8zM1201.8 629.3l2.2 2.8 2.2-2.8z" fill="#4a4a4a"/></svg><div class="div" style="top:650px"></div><svg width="1280" height="800"><path d="M1005 664v8.5l7.5-4.25z" fill="#333"/></svg><div class="rh" style="left:1019.7px;top:660.3px">Stroke</div><div class="well" style="left:1144.5px;top:658.4px"></div><div class="a" style="left:1161.8px;top:661.6px;width:47px;height:13.8px;background:#47d35a;border:1px solid #3cb84e"></div><svg width="1280" height="800"><circle cx="1152.7" cy="668.4" r="5" fill="#7b3fd0"/><path d="M1150.7 666.4l4 4M1154.7 666.4l-4 4" stroke="#fff" stroke-width="1.4"/></svg><div class="div" style="top:686px"></div><svg width="1280" height="800"><path d="M1003.5 701h8.5l-4.25 7.5z" fill="#333"/></svg><div class="rh" style="left:1019.7px;top:697px">Shadows</div><div class="rt" style="left:1000px;top:726.4px;width:52.7px;text-align:right;color:#6a6a6a;font-size:10px">Outer Fill</div><div class="pop" style="left:1060px;top:724.6px;width:152px"><span style="position:absolute;left:26px;top:0">No Shadow</span></div><svg width="1280" height="800"><circle cx="1076" cy="733.2" r="5.5" fill="#fff" stroke="#c8c8c8" stroke-width="1"/><path d="M1072.3 737l7.4-7.6" stroke="#e8443a" stroke-width="1.2"/><path d="M1201.8 729.5l2.2-2.8 2.2 2.8zM1201.8 733.3l2.2 2.8 2.2-2.8z" fill="#4a4a4a"/></svg>
</body></html>
